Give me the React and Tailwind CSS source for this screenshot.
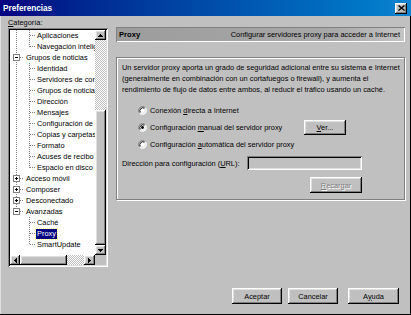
import React from "react";

const raised =
  "bg-[#c0c0c0] shadow-[inset_-1px_-1px_#000000,inset_1px_1px_#ffffff,inset_-2px_-2px_#808080,inset_2px_2px_#dfdfdf]";

function Btn({ children, className = "" }) {
  return (
    <div className={`flex items-center justify-center ${raised} ${className}`}>
      {children}
    </div>
  );
}

function Arrow({ dir }) {
  const d = {
    up: "M2 0h1v1h1v1h1v1H0V2h1V1h1z",
    down: "M0 0h5v1H4v1H3v1H2V2H1V1H0z",
    left: "M0 2h1V1h1V0h1v5H2V4H1V3H0z",
    right: "M0 0h1v1h1v1h1v1H2v1H1v1H0z",
  }[dir];
  const w = dir === "up" || dir === "down" ? 5 : 3;
  const h = dir === "up" || dir === "down" ? 3 : 5;
  return (
    <svg width={w} height={h} viewBox={`0 0 ${w} ${h}`} shapeRendering="crispEdges">
      <path d={d} fill="#000" />
    </svg>
  );
}

function Radio({ checked }) {
  return (
    <svg width="9" height="9" viewBox="0 0 9 9" className="flex-none">
      <circle cx="4.5" cy="4.5" r="3.5" fill="#fff" />
      <path d="M1.67 7.33A4 4 0 0 1 7.33 1.67" stroke="#808080" fill="none" strokeWidth="1" />
      <path d="M7.33 1.67A4 4 0 0 1 1.67 7.33" stroke="#ffffff" fill="none" strokeWidth="1" />
      <path d="M2.4 6.6A3 3 0 0 1 6.6 2.4" stroke="#000" fill="none" strokeWidth="1" />
      <path d="M6.6 2.4A3 3 0 0 1 2.4 6.6" stroke="#dfdfdf" fill="none" strokeWidth="1" />
      {checked && <circle cx="4.5" cy="4.5" r="1.4" fill="#000" />}
    </svg>
  );
}

const rows = [
  { t: "Aplicaciones", lvl: 1 },
  { t: "Navegación inteligente", lvl: 1 },
  { t: "Grupos de noticias", lvl: 0, box: "-" },
  { t: "Identidad", lvl: 1 },
  { t: "Servidores de correo", lvl: 1 },
  { t: "Grupos de noticias", lvl: 1 },
  { t: "Dirección", lvl: 1 },
  { t: "Mensajes", lvl: 1 },
  { t: "Configuración de ventana", lvl: 1 },
  { t: "Copias y carpetas", lvl: 1 },
  { t: "Formato", lvl: 1 },
  { t: "Acuses de recibo", lvl: 1 },
  { t: "Espacio en disco", lvl: 1 },
  { t: "Acceso móvil", lvl: 0, box: "+" },
  { t: "Composer", lvl: 0, box: "+" },
  { t: "Desconectado", lvl: 0, box: "+" },
  { t: "Avanzadas", lvl: 0, box: "-" },
  { t: "Caché", lvl: 1 },
  { t: "Proxy", lvl: 1, sel: true },
  { t: "SmartUpdate", lvl: 1 },
];

function TreeLines() {
  const c = (i) => 11 * i + 5.5;
  const dot = { stroke: "#808080", strokeDasharray: "1 1", strokeWidth: 1 };
  const childTicks = [0, 1, 3, 4, 5, 6, 7, 8, 9, 10, 11, 12, 17, 18, 19];
  const boxes = rows.map((r, i) => (r.box ? i : -1)).filter((i) => i >= 0);
  return (
    <svg width="85" height="225" className="absolute left-0 top-0" shapeRendering="crispEdges">
      <line x1="6.5" y1="0" x2="6.5" y2={c(16)} style={dot} />
      <line x1="19.5" y1="0" x2="19.5" y2={c(1)} style={dot} />
      <line x1="19.5" y1={c(2) + 5} x2="19.5" y2={c(12)} style={dot} />
      <line x1="19.5" y1={c(16) + 5} x2="19.5" y2={c(19)} style={dot} />
      {childTicks.map((i) => (
        <line key={"t" + i} x1="20" y1={c(i)} x2="26" y2={c(i)} style={dot} />
      ))}
      {boxes.map((i) => (
        <g key={"b" + i}>
          <line x1="10" y1={c(i)} x2="14" y2={c(i)} style={dot} />
          <rect x="3.5" y={c(i) - 3} width="6" height="6" fill="#fff" stroke="#808080" />
          <line x1="5" y1={c(i)} x2="8" y2={c(i)} stroke="#000" />
          {rows[i].box === "+" && (
            <line x1="6.5" y1={c(i) - 1.5} x2="6.5" y2={c(i) + 1.5} stroke="#000" />
          )}
        </g>
      ))}
    </svg>
  );
}

function Tree() {
  return (
    <div className="h-[239px] p-[2px] bg-[#c0c0c0] shadow-[inset_1px_1px_#808080,inset_-1px_-1px_#ffffff,inset_2px_2px_#000000,inset_-2px_-2px_#dfdfdf] flex flex-col">
      <div className="flex h-[225px]">
        <div className="relative w-[85px] bg-white overflow-hidden">
          <TreeLines />
          <div className="relative flex flex-col">
            {rows.map((r, i) => (
              <div
                key={i}
                className={`h-[11px] flex items-center whitespace-nowrap ${
                  r.lvl === 0 ? "pl-[15px]" : "pl-[26px]"
                }`}
              >
                <span
                  className={`px-[1px] leading-[10px] ${
                    r.sel
                      ? "bg-[#000080] text-white outline-1 outline-dotted outline-[#ffff80]"
                      : ""
                  }`}
                >
                  {r.t}
                </span>
              </div>
            ))}
          </div>
        </div>
        <div className="w-[11px] flex flex-col">
          <Btn className="h-[10px] flex-none">
            <Arrow dir="up" />
          </Btn>
          <div className="flex-1 flex flex-col bg-[repeating-conic-gradient(#c0c0c0_0%_25%,#ffffff_0%_50%)] bg-[length:2px_2px]">
            <div className="flex-1" />
            <div className={`h-[135px] ${raised}`} />
          </div>
          <Btn className="h-[10px] flex-none">
            <Arrow dir="down" />
          </Btn>
        </div>
      </div>
      <div className="flex h-[10px]">
        <Btn className="w-[10px]">
          <Arrow dir="left" />
        </Btn>
        <div className={`w-[47px] ${raised}`} />
        <div className="flex-1 bg-[repeating-conic-gradient(#c0c0c0_0%_25%,#ffffff_0%_50%)] bg-[length:2px_2px]" />
        <Btn className="w-[11px]">
          <Arrow dir="right" />
        </Btn>
        <div className="w-[11px] bg-[#c0c0c0]" />
      </div>
    </div>
  );
}

export default function App() {
  return (
    <div className="w-[411px] h-[315px] bg-[#c0c0c0] flex flex-col overflow-hidden text-black text-[7.4px] leading-[11px] font-['Liberation_Sans',Arial,sans-serif] shadow-[inset_-1px_-1px_#000000,inset_1px_1px_#dfdfdf]">
      {/* Title bar */}
      <div className="h-[16px] flex-none flex items-center justify-between pl-[3px] pr-[4px] bg-gradient-to-r from-[#000080] to-[#1084d0]">
        <span className="text-white font-bold text-[8.2px]">Preferencias</span>
        <Btn className="w-[12px] h-[11px]">
          <svg width="7" height="6" viewBox="0 0 7 6">
            <path d="M0.5 0.5L6.5 5.5M6.5 0.5L0.5 5.5" stroke="#000" strokeWidth="1.4" />
          </svg>
        </Btn>
      </div>

      {/* Body */}
      <div className="flex h-[254px] flex-none">
        <div className="ml-[8px] w-[100px] flex flex-col">
          <div className="h-[12px] flex items-center">
            <span>
              <u className="underline-offset-1">C</u>ategoría:
            </span>
          </div>
          <Tree />
        </div>

        <div className="ml-[8px] w-[289px] pt-[11px] flex flex-col">
          <div className="h-[15px] flex items-center justify-between pl-[3px] pr-[5px] bg-gradient-to-r from-[#9c9c9c] via-[#a8a8a8] via-75% to-[#c4c4c4] shadow-[inset_1px_1px_#808080,inset_-1px_-1px_#ffffff]">
            <span className="font-bold text-[7.6px]">Proxy</span>
            <span>Configurar servidores proxy para acceder a Internet</span>
          </div>

          <div className="mt-[15px] h-[143px] border border-[#808080] shadow-[inset_1px_1px_#ffffff,1px_1px_#ffffff] pl-[5px] pt-[4px] flex flex-col">
            <p className="whitespace-nowrap leading-[11px]">
              Un servidor proxy aporta un grado de seguridad adicional entre su sistema e Internet
              <br />
              (generalmente en combinación con un cortafuegos o firewall), y aumenta el
              <br />
              rendimiento de flujo de datos entre ambos, al reducir el tráfico usando un caché.
            </p>

            <div className="mt-[10px] h-[11px] flex items-center pl-[16px] gap-[3px]">
              <Radio />
              <span>
                Conexión <u className="underline-offset-1">d</u>irecta a Internet
              </span>
            </div>

            <div className="mt-[4px] h-[15px] flex items-center pl-[16px] gap-[3px]">
              <Radio checked />
              <span className="w-[151px] whitespace-nowrap">
                Configuración <u className="underline-offset-1">m</u>anual del servidor proxy
              </span>
              <Btn className="w-[42px] h-[15px]">
                <span>
                  <u className="underline-offset-1">V</u>er...
                </span>
              </Btn>
            </div>

            <div className="mt-[4px] h-[11px] flex items-center pl-[16px] gap-[3px]">
              <Radio />
              <span>
                Configuración <u className="underline-offset-1">a</u>utomática del servidor proxy
              </span>
            </div>

            <div className="mt-[6px] h-[14px] flex items-center">
              <span className="w-[125px] whitespace-nowrap">
                Dirección para configuración (<u className="underline-offset-1">U</u>RL):
              </span>
              <div className="w-[115px] h-[14px] bg-[#c0c0c0] shadow-[inset_1px_1px_#808080,inset_-1px_-1px_#ffffff,inset_2px_2px_#000000,inset_-2px_-2px_#dfdfdf]" />
            </div>

            <div className="mt-[7px] flex">
              <Btn className="ml-[188px] w-[52px] h-[16px]">
                <span className="text-[#808080] [text-shadow:1px_1px_#ffffff]">
                  <u className="underline-offset-1">R</u>ecargar
                </span>
              </Btn>
            </div>
          </div>
        </div>
      </div>

      {/* Bottom buttons */}
      <div className="mt-[18px] h-[16px] flex justify-end pr-[12px]">
        <Btn className="w-[50px] h-[16px]">Aceptar</Btn>
        <Btn className="ml-[6px] w-[50px] h-[16px]">Cancelar</Btn>
        <Btn className="ml-[10px] w-[51px] h-[16px]">
          <span>
            A<u className="underline-offset-1">y</u>uda
          </span>
        </Btn>
      </div>
    </div>
  );
}
